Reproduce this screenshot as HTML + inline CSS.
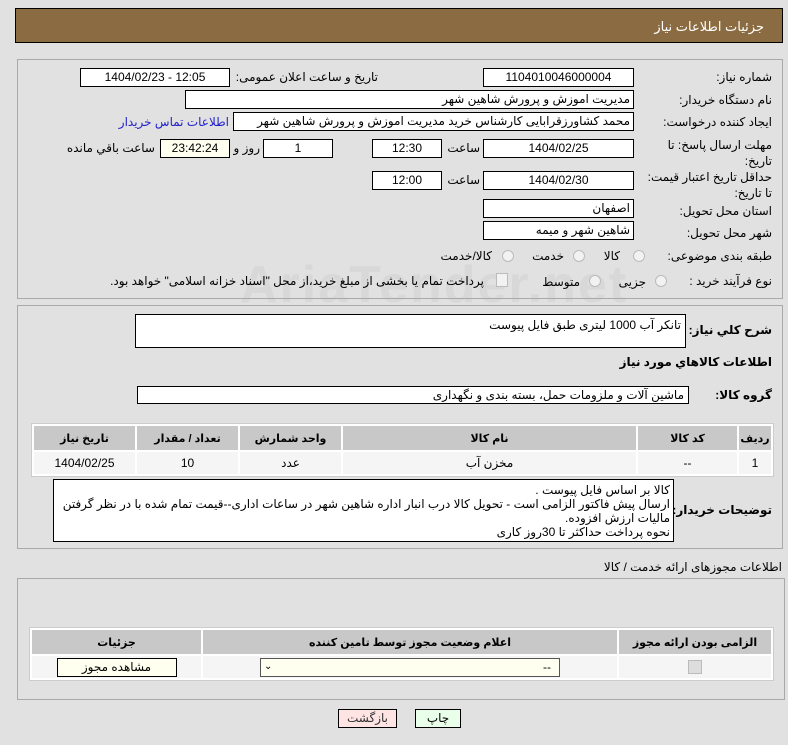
<!DOCTYPE html>
<html><head><meta charset="utf-8"><style>
body{margin:0;width:788px;height:745px;background:#e1e1e1;font-family:Tahoma,"Liberation Sans","DejaVu Sans",sans-serif;font-size:12px;color:#000;position:relative;overflow:hidden}
.a{position:absolute;white-space:nowrap}
.b{position:absolute;background:#fff;border:1px solid #000;box-sizing:border-box;text-align:center;line-height:16px;font-size:12px}
.l{position:absolute;white-space:nowrap;direction:rtl;text-align:right;font-size:12px}
.p{position:absolute;border:1px solid #a9a9a9;box-sizing:border-box}
.r{position:absolute;width:12px;height:12px;border-radius:50%;border:1px solid #bbb;background:#f2f2f2;box-sizing:border-box}
table{position:absolute;border-collapse:separate;border-spacing:2px;background:#fff;border:1px solid #ccc}
th{background:#c8c8c8;font-weight:bold;font-size:11px;height:22px}
td{background:#f5f5f5;text-align:center;height:20px;font-size:12px}
</style></head><body>
<div class="a" style="left:15px;top:8px;width:768px;height:35px;background:#8b6c42;border:1px solid #000;box-sizing:border-box"></div>
<div class="l" style="right:24px;top:19px;color:#fff;font-size:13px">جزئیات اطلاعات نیاز</div>

<div class="a" style="left:240px;top:255px;font-size:52px;font-weight:bold;color:rgba(160,160,160,0.12);letter-spacing:2px">AriaTender.net</div>

<div class="p" style="left:17px;top:59px;width:766px;height:240px"></div>
<div class="l" style="right:16px;top:70px">شماره نیاز:</div>
<div class="b" style="left:483px;top:68px;width:151px;height:19px">1104010046000004</div>
<div class="l" style="right:410px;top:70px">تاریخ و ساعت اعلان عمومی:</div>
<div class="b" style="left:80px;top:68px;width:150px;height:19px">1404/02/23 - 12:05</div>

<div class="l" style="right:16px;top:93px">نام دستگاه خریدار:</div>
<div class="b" style="left:185px;top:90px;width:449px;height:19px;text-align:right;padding-right:3px">مدیریت اموزش و پرورش شاهین شهر</div>

<div class="l" style="right:16px;top:115px">ایجاد کننده درخواست:</div>
<div class="b" style="left:233px;top:112px;width:401px;height:19px;text-align:right;padding-right:3px">محمد کشاورزقرابایی کارشناس خرید مدیریت اموزش و پرورش شاهین شهر</div>
<div class="l" style="right:559px;top:115px;color:#2222cc">اطلاعات تماس خریدار</div>

<div class="l" style="right:16px;top:137px;line-height:16px;text-align:right">مهلت ارسال پاسخ: تا<br>تاریخ:</div>
<div class="b" style="left:483px;top:139px;width:151px;height:19px">1404/02/25</div>
<div class="l" style="right:308px;top:141px">ساعت</div>
<div class="b" style="left:372px;top:139px;width:70px;height:19px">12:30</div>
<div class="b" style="left:263px;top:139px;width:70px;height:19px">1</div>
<div class="l" style="right:528px;top:141px">روز و</div>
<div class="b" style="left:160px;top:139px;width:70px;height:19px;background:#fffff0">23:42:24</div>
<div class="l" style="right:633px;top:141px">ساعت باقي مانده</div>

<div class="l" style="right:16px;top:169px;line-height:16px">حداقل تاریخ اعتبار قیمت:<br>تا تاریخ:</div>
<div class="b" style="left:483px;top:171px;width:151px;height:19px">1404/02/30</div>
<div class="l" style="right:308px;top:173px">ساعت</div>
<div class="b" style="left:372px;top:171px;width:70px;height:19px">12:00</div>

<div class="l" style="right:16px;top:204px">استان محل تحویل:</div>
<div class="b" style="left:483px;top:199px;width:151px;height:19px;text-align:right;padding-right:3px">اصفهان</div>
<div class="l" style="right:16px;top:226px">شهر محل تحویل:</div>
<div class="b" style="left:483px;top:221px;width:151px;height:19px;text-align:right;padding-right:3px">شاهین شهر و میمه</div>

<div class="l" style="right:16px;top:249px">طبقه بندی موضوعی:</div>
<div class="r" style="left:633px;top:250px"></div><div class="l" style="right:168px;top:249px">کالا</div>
<div class="r" style="left:573px;top:250px"></div><div class="l" style="right:224px;top:249px">خدمت</div>
<div class="r" style="left:502px;top:250px"></div><div class="l" style="right:296px;top:249px">کالا/خدمت</div>

<div class="l" style="right:16px;top:274px">نوع فرآیند خرید :</div>
<div class="r" style="left:655px;top:275px"></div><div class="l" style="right:142px;top:275px">جزیی</div>
<div class="r" style="left:589px;top:275px"></div><div class="l" style="right:208px;top:275px">متوسط</div>
<div class="a" style="left:496px;top:273px;width:10px;height:12px;border:1px solid #bbb;background:#f2f2f2"></div>
<div class="l" style="right:304px;top:274px">پرداخت تمام یا بخشی از مبلغ خرید،از محل "اسناد خزانه اسلامی" خواهد بود.</div>

<div class="p" style="left:17px;top:305px;width:766px;height:244px"></div>
<div class="l" style="right:16px;top:323px;font-weight:bold">شرح کلي نیاز:</div>
<div class="b" style="left:135px;top:314px;width:551px;height:34px;text-align:right;padding-right:4px;line-height:20px">تانکر آب 1000 لیتری طبق فایل پیوست</div>
<div class="l" style="right:16px;top:355px;font-weight:bold">اطلاعات کالاهاي مورد نیاز</div>
<div class="l" style="right:16px;top:388px;font-weight:bold">گروه کالا:</div>
<div class="b" style="left:137px;top:386px;width:552px;height:18px;text-align:right;padding-right:4px">ماشین آلات و ملزومات حمل، بسته بندی و نگهداری</div>

<table style="left:31px;top:423px;width:743px;direction:rtl">
<tr><th style="width:30px">ردیف</th><th style="width:97px">کد کالا</th><th>نام کالا</th><th style="width:99px">واحد شمارش</th><th style="width:99px">تعداد / مقدار</th><th style="width:99px">تاریخ نیاز</th></tr>
<tr><td>1</td><td>--</td><td>مخزن آب</td><td>عدد</td><td>10</td><td>1404/02/25</td></tr>
</table>

<div class="l" style="right:16px;top:503px;font-weight:bold">توضیحات خریدار:</div>
<div class="b" style="left:53px;top:479px;width:621px;height:63px;text-align:right;padding:3px 3px 0;line-height:14px;white-space:normal;direction:rtl;font-size:12px">کالا بر اساس فایل پیوست .<br>ارسال پیش فاکتور الزامی است - تحویل کالا درب انبار اداره شاهین شهر در ساعات اداری--قیمت تمام شده با در نظر گرفتن مالیات ارزش افزوده.<br>نحوه پرداخت حداکثر تا 30روز کاری</div>

<div class="l" style="right:6px;top:560px">اطلاعات مجوزهای ارائه خدمت / کالا</div>
<div class="p" style="left:17px;top:578px;width:768px;height:122px"></div>
<table style="left:29px;top:627px;width:745px;direction:rtl">
<tr><th style="width:150px">الزامی بودن ارائه مجوز</th><th>اعلام وضعیت مجوز توسط تامین کننده</th><th style="width:167px">جزئیات</th></tr>
<tr><td><span style="display:inline-block;width:12px;height:12px;background:#ddd;border:1px solid #bbb;vertical-align:middle"></span></td><td><div style="margin:0 auto;width:298px;height:17px;border:1px solid #555;background:#fffff0;text-align:left;position:relative;line-height:16px"><span style="position:absolute;left:3px;font-size:10px">&#8964;</span><span style="position:absolute;right:8px">--</span></div></td><td><div style="margin:0 auto;width:118px;height:17px;border:1px solid #000;background:#fffff0;line-height:16px">مشاهده مجوز</div></td></tr>
</table>

<div class="b" style="left:415px;top:709px;width:46px;height:19px;background:#eaffea">چاپ</div>
<div class="b" style="left:338px;top:709px;width:59px;height:19px;background:#ffe4e4;color:#333">بازگشت</div>
</body></html>
